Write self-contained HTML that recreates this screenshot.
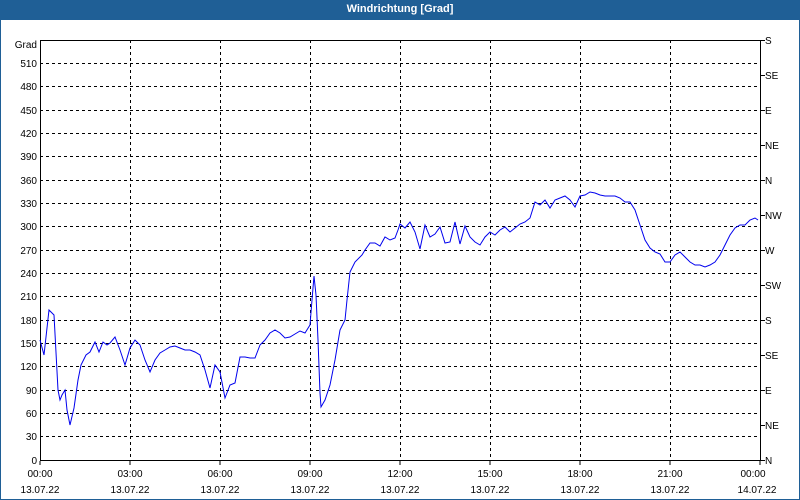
<!DOCTYPE html>
<html><head><style>
body{margin:0;width:800px;height:500px;overflow:hidden;background:#fff;font-family:"Liberation Sans",sans-serif;}
.frame{position:absolute;left:0;top:0;width:798px;height:498px;border:1px solid #1f5f96;}
.title{position:absolute;left:0;top:0;width:800px;height:20px;background:#1f5f96;color:#fff;font-weight:bold;font-size:11px;text-align:center;line-height:19px;}
svg{position:absolute;left:0;top:0}
text{font-family:"Liberation Sans",sans-serif;font-size:10px;fill:#000}
</style></head><body>
<div class="frame"></div>
<div class="title">Windrichtung [Grad]</div>
<svg width="800" height="500">
<g stroke="#000" stroke-dasharray="3,3" stroke-width="1">
<line x1="40" x2="760" y1="63.5" y2="63.5"/><line x1="40" x2="760" y1="86.5" y2="86.5"/><line x1="40" x2="760" y1="110.5" y2="110.5"/><line x1="40" x2="760" y1="133.5" y2="133.5"/><line x1="40" x2="760" y1="156.5" y2="156.5"/><line x1="40" x2="760" y1="180.5" y2="180.5"/><line x1="40" x2="760" y1="203.5" y2="203.5"/><line x1="40" x2="760" y1="226.5" y2="226.5"/><line x1="40" x2="760" y1="250.5" y2="250.5"/><line x1="40" x2="760" y1="273.5" y2="273.5"/><line x1="40" x2="760" y1="296.5" y2="296.5"/><line x1="40" x2="760" y1="320.5" y2="320.5"/><line x1="40" x2="760" y1="343.5" y2="343.5"/><line x1="40" x2="760" y1="366.5" y2="366.5"/><line x1="40" x2="760" y1="390.5" y2="390.5"/><line x1="40" x2="760" y1="413.5" y2="413.5"/><line x1="40" x2="760" y1="436.5" y2="436.5"/>
<line x1="130.5" x2="130.5" y1="40" y2="460"/><line x1="220.5" x2="220.5" y1="40" y2="460"/><line x1="310.5" x2="310.5" y1="40" y2="460"/><line x1="400.5" x2="400.5" y1="40" y2="460"/><line x1="490.5" x2="490.5" y1="40" y2="460"/><line x1="580.5" x2="580.5" y1="40" y2="460"/><line x1="670.5" x2="670.5" y1="40" y2="460"/>
</g>
<rect x="40.5" y="40.5" width="720" height="420" fill="none" stroke="#000"/>
<g stroke="#000">
<path d="M40 461v4M130 461v4M220 461v4M310 461v4M400 461v4M490 461v4M580 461v4M670 461v4M760 461v4"/>
<path d="M761 40.5h4M761 75.5h4M761 110.5h4M761 145.5h4M761 180.5h4M761 215.5h4M761 250.5h4M761 285.5h4M761 320.5h4M761 355.5h4M761 390.5h4M761 425.5h4M761 460.5h4"/>
</g>
<polyline fill="none" stroke="#0000ee" stroke-width="1" points="40,340 44,355 49,310 54,315 58,390 60,400 62,395 65,390 67,410 70,425 74,408 78,380 81,365 86,355 90,352 95,342 99,352 103,342 107,345 110,343 115,337 120,350 125,365 130,348 135,340 140,345 145,360 150,372 155,360 160,353 165,350 170,347 175,346 180,348 185,350 190,350 195,352 200,355 205,370 210,388 215,365 220,372 225,398 230,385 235,383 240,357 245,357 250,358 255,358 260,345 265,340 270,333 275,330 280,333 285,338 290,337 295,334 300,331 305,333 310,325 312,300 314,276 316,295 318,340 320,393 321,407 325,400 330,385 335,360 340,330 345,320 347,300 350,272 355,262 362,255 365,250 370,243 375,243 380,246 385,237 390,240 395,238 398,230 400,224 405,228 410,222 415,232 420,249 425,225 430,237 435,234 440,227 445,243 450,242 455,222 460,244 465,226 470,237 475,242 480,245 485,237 490,232 495,235 500,230 505,227 510,232 515,228 520,224 525,222 530,218 535,202 540,205 545,200 550,208 555,200 560,198 565,196 570,200 575,207 580,196 585,195 590,192 595,193 600,195 605,196 610,196 615,196 620,198 625,202 630,202 635,210 640,225 645,240 650,248 655,252 660,254 665,262 670,262 675,255 680,252 685,257 690,262 695,265 700,265 705,267 710,265 715,262 720,255 725,245 730,235 735,228 740,225 745,225 750,220 755,218 758,220"/>
<g text-anchor="end">
<text x="37" y="48">Grad</text>
<text x="37" y="67">510</text><text x="37" y="90">480</text><text x="37" y="114">450</text><text x="37" y="137">420</text><text x="37" y="160">390</text><text x="37" y="184">360</text><text x="37" y="207">330</text><text x="37" y="230">300</text><text x="37" y="254">270</text><text x="37" y="277">240</text><text x="37" y="300">210</text><text x="37" y="324">180</text><text x="37" y="347">150</text><text x="37" y="370">120</text><text x="37" y="394">90</text><text x="37" y="417">60</text><text x="37" y="440">30</text><text x="37" y="464">0</text>
</g>
<g>
<text x="765" y="44">S</text><text x="765" y="79">SE</text><text x="765" y="114">E</text><text x="765" y="149">NE</text><text x="765" y="184">N</text><text x="765" y="219">NW</text><text x="765" y="254">W</text><text x="765" y="289">SW</text><text x="765" y="324">S</text><text x="765" y="359">SE</text><text x="765" y="394">E</text><text x="765" y="429">NE</text><text x="765" y="464">N</text>
</g>
<g text-anchor="middle">
<text x="40" y="477">00:00</text><text x="130" y="477">03:00</text><text x="220" y="477">06:00</text><text x="310" y="477">09:00</text><text x="400" y="477">12:00</text><text x="490" y="477">15:00</text><text x="580" y="477">18:00</text><text x="670" y="477">21:00</text><text x="753" y="477">00:00</text>
<text x="40" y="493">13.07.22</text><text x="130" y="493">13.07.22</text><text x="220" y="493">13.07.22</text><text x="310" y="493">13.07.22</text><text x="400" y="493">13.07.22</text><text x="490" y="493">13.07.22</text><text x="580" y="493">13.07.22</text><text x="670" y="493">13.07.22</text><text x="757" y="493">14.07.22</text>
</g>
</svg>
</body></html>
